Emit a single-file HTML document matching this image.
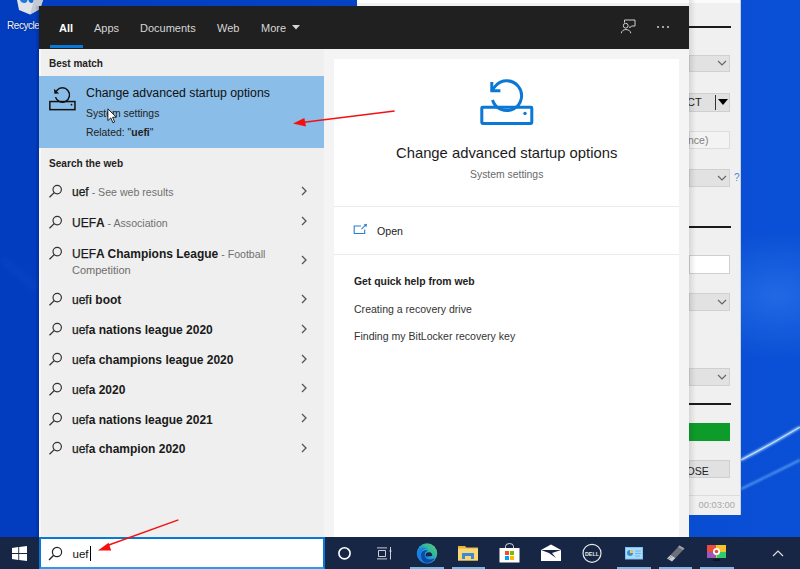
<!DOCTYPE html>
<html><head><meta charset="utf-8">
<style>
*{margin:0;padding:0;box-sizing:border-box}
html,body{width:800px;height:569px;overflow:hidden;background:#033cc0;font-family:"Liberation Sans",sans-serif}
.a{position:absolute;white-space:nowrap;line-height:1}
#back{position:absolute;left:357px;top:0;width:384px;height:515px;background:#f0f0f0;border-right:1px solid #c8d0e0}
#back .top{position:absolute;left:0;top:0;width:100%;height:3px;background:#fbfbfb}
#hdr{position:absolute;left:39px;top:6px;width:650px;height:43px;background:#202020}
#lp{position:absolute;left:39px;top:49px;width:285px;height:488px;background:#efefef}
#rp{position:absolute;left:324px;top:49px;width:365px;height:488px;background:#f4f4f4}
#card{position:absolute;left:334px;top:59px;width:345px;height:478px;background:#fff}
.tab{position:absolute;top:22.5px;font-size:11px;color:#d6d6d6}
.li{position:absolute;left:72px;font-size:12px;font-weight:normal;color:#1a1a1a;-webkit-text-stroke:0.25px #1a1a1a}
.li b{font-weight:bold;-webkit-text-stroke:0}
.li span{font-weight:normal;color:#707070;font-size:10.6px;-webkit-text-stroke:0}
.si{position:absolute;left:48px;width:16px;height:14px}
.chev{position:absolute;left:300px;width:8px;height:10px}
#tb{position:absolute;left:0;top:537px;width:800px;height:32px;background:#162644}
</style></head><body>
<svg id="desk" width="800" height="537" style="position:absolute;left:0;top:0">
  <defs>
    <linearGradient id="dg" x1="0" y1="0" x2="1" y2="0">
      <stop offset="0" stop-color="#023cbf"/><stop offset="0.45" stop-color="#0442c6"/><stop offset="1" stop-color="#0a50d6"/>
    </linearGradient>
    <radialGradient id="dr" cx="0.97" cy="0.55" r="0.12">
      <stop offset="0" stop-color="#2a74ea" stop-opacity="0.7"/><stop offset="1" stop-color="#2a74ea" stop-opacity="0"/>
    </radialGradient>
    <filter id="bl"><feGaussianBlur stdDeviation="1.2"/></filter><filter id="bl2" x="-50%" y="-50%" width="200%" height="200%"><feGaussianBlur stdDeviation="4"/></filter>
  </defs>
  <rect width="800" height="537" fill="url(#dg)"/>
  <rect width="800" height="537" fill="url(#dr)"/>
  <path d="M741 460 Q770 445 800 427" stroke="#a8d4ff" stroke-width="2.5" fill="none" filter="url(#bl)"/>
  <path d="M741 460 Q770 445 800 427" stroke="#e8f4ff" stroke-width="0.8" fill="none"/>
  <path d="M0 258 L39 290" stroke="#3a7ae0" stroke-width="8" stroke-opacity="0.10" fill="none" filter="url(#bl2)"/>
  <path d="M741 489 Q770 475 800 460" stroke="#6fb0ff" stroke-width="1.5" fill="none" filter="url(#bl)"/>
</svg>
<!-- recycle bin -->
<svg class="a" style="left:16px;top:0" width="28" height="16" viewBox="0 0 28 16">
  <path d="M1 0 H27 L24 9 L14 14.5 L3 10 Z" fill="#dfe3ea"/>
  <path d="M14 14.5 L24 9 L27 0 H18 Z" fill="#c4cad4"/>
  <path d="M4 0 Q5 3 8.5 3 Q11 3 11.5 0 Z" fill="#1e78e0"/>
  <path d="M12.5 0 Q13 3.2 16 3 Q17.5 2.5 17.5 0 Z" fill="#1468d8"/>
</svg>
<div class="a" style="left:7px;top:20.8px;font-size:10px;letter-spacing:-0.45px;color:#f4f6fa;text-shadow:0 0 1.5px #001a66">Recycle</div>

<div id="back"><div class="top"></div>
  <div class="a" style="left:332px;top:26px;width:42px;height:2px;background:#1a1a1a"></div>
  <div class="a" style="left:332px;top:55px;width:41px;height:17px;background:#e2e2e2;border:1px solid #d0d0d0"></div>
  <svg class="a" style="left:360px;top:60px" width="10" height="6"><path d="M1 1 L5 5 L9 1" fill="none" stroke="#666" stroke-width="1.2"/></svg>
  <div class="a" style="left:332px;top:93px;width:41px;height:19px;background:#e1e1e1;border:1px solid #cfcfcf"></div>
  <div class="a" style="left:330px;top:97.3px;font-size:11px;color:#222">CT</div>
  <div class="a" style="left:358px;top:95px;width:1px;height:15px;background:#333"></div>
  <svg class="a" style="left:361px;top:99px" width="10" height="7"><path d="M0 0 L10 0 L5 6 Z" fill="#000"/></svg>
  <div class="a" style="left:332px;top:131px;width:41px;height:18px;background:#f3f3f3;border:1px solid #dcdcdc"></div>
  <div class="a" style="left:331px;top:134.5px;font-size:10.5px;color:#808080">nce)</div>
  <div class="a" style="left:332px;top:169px;width:41px;height:18px;background:#e2e2e2;border:1px solid #d0d0d0"></div>
  <svg class="a" style="left:360px;top:175px" width="10" height="6"><path d="M1 1 L5 5 L9 1" fill="none" stroke="#666" stroke-width="1.2"/></svg>
  <div class="a" style="left:377px;top:173px;font-size:10px;color:#4a86d8">?</div>
  <div class="a" style="left:332px;top:226px;width:42px;height:2px;background:#1a1a1a"></div>
  <div class="a" style="left:332px;top:255px;width:41px;height:19px;background:#fff;border:1px solid #cfcfcf"></div>
  <div class="a" style="left:332px;top:293px;width:41px;height:18px;background:#e2e2e2;border:1px solid #d0d0d0"></div>
  <svg class="a" style="left:360px;top:299px" width="10" height="6"><path d="M1 1 L5 5 L9 1" fill="none" stroke="#666" stroke-width="1.2"/></svg>
  <div class="a" style="left:332px;top:368px;width:41px;height:18px;background:#e2e2e2;border:1px solid #d0d0d0"></div>
  <svg class="a" style="left:360px;top:374px" width="10" height="6"><path d="M1 1 L5 5 L9 1" fill="none" stroke="#666" stroke-width="1.2"/></svg>
  <div class="a" style="left:332px;top:403px;width:42px;height:2px;background:#1a1a1a"></div>
  <div class="a" style="left:332px;top:423px;width:41px;height:18px;background:#0d9b2a"></div>
  <div class="a" style="left:332px;top:460px;width:41px;height:18px;background:#e1e1e1;border:1px solid #cfcfcf"></div>
  <div class="a" style="left:329.5px;top:465.5px;font-size:10.6px;color:#222">OSE</div>
  <div class="a" style="left:332px;top:495px;width:52px;height:1px;background:#dcdcdc"></div>
  <div class="a" style="left:341.5px;top:500.2px;font-size:9.4px;color:#a8a8a8">00:03:00</div>
</div>

<div class="a" style="left:689px;top:0;width:7px;height:515px;background:linear-gradient(90deg,rgba(0,0,0,0.10),rgba(0,0,0,0))"></div>
<div class="a" style="left:35px;top:6px;width:4px;height:531px;background:linear-gradient(90deg,rgba(0,0,30,0),rgba(0,0,30,0.22))"></div>
<div id="hdr"></div>
<div id="lp"></div>
<div class="a" style="left:39px;top:49px;width:1.5px;height:488px;background:#f9f9f9"></div>
<div id="rp"></div>
<div id="card"></div>

<!-- tabs -->
<div class="a tab" style="left:59px;font-weight:bold;color:#fff">All</div>
<div class="a" style="left:50px;top:45px;width:33px;height:3px;background:#0a78d7"></div>
<div class="a tab" style="left:94px">Apps</div>
<div class="a tab" style="left:140px">Documents</div>
<div class="a tab" style="left:217px">Web</div>
<div class="a tab" style="left:261px">More</div>
<svg class="a" style="left:292px;top:25px" width="8" height="5"><path d="M0 0 L8 0 L4 4.5 Z" fill="#d6d6d6"/></svg>
<!-- feedback icon -->
<svg class="a" style="left:618px;top:17px" width="20" height="18" viewBox="0 0 20 18">
  <path d="M6.5 5.6 V3 H17 V9 H13.5 L11.8 10.8 V9.5" fill="none" stroke="#cfcfcf" stroke-width="1"/>
  <circle cx="7.7" cy="8.7" r="2.4" fill="none" stroke="#cfcfcf" stroke-width="1"/>
  <path d="M3.3 16.3 C3.6 11.3 12.4 11.3 12.8 16.3" fill="none" stroke="#cfcfcf" stroke-width="1"/>
</svg>
<div class="a" style="left:657px;top:25.5px;width:2px;height:2px;background:#d0d0d0;border-radius:1px"></div>
<div class="a" style="left:662px;top:25.5px;width:2px;height:2px;background:#d0d0d0;border-radius:1px"></div>
<div class="a" style="left:667px;top:25.5px;width:2px;height:2px;background:#d0d0d0;border-radius:1px"></div>

<!-- left panel -->
<div class="a" style="left:49px;top:59px;font-size:10px;font-weight:bold;color:#222">Best match</div>
<div class="a" style="left:39px;top:76px;width:285px;height:72px;background:#8abde7"></div>
<svg class="a" style="left:47px;top:85px" width="32" height="28" viewBox="0 0 32 28">
  <g fill="none" stroke="#111" stroke-width="1.5">
    <rect x="2.85" y="16.55" width="25.1" height="8.1"/>
    <path d="M8.5 12.1 A7.15 7.15 0 1 0 9.87 5.4 L8.2 7.2"/>
  </g>
  <path d="M7.0 3.7 L7.4 8.8 L12.1 8.4 Z" fill="#111"/>
  <circle cx="24.5" cy="19.7" r="0.9" fill="#111"/>
</svg>
<div class="a" style="left:86px;top:87px;font-size:12.3px;color:#111">Change advanced startup options</div>
<div class="a" style="left:86px;top:109px;font-size:10.4px;color:#222">System settings</div>
<div class="a" style="left:86px;top:128px;font-size:10.4px;color:#222">Related: "<b>uefi</b>"</div>
<!-- cursor -->
<svg class="a" style="left:106.8px;top:108.2px" width="10.2" height="16" viewBox="0 0 12 19">
  <path d="M1 1 L1 15 L4.5 11.8 L7 17.5 L9 16.6 L6.6 11 L11 11 Z" fill="#fff" stroke="#000" stroke-width="1"/>
</svg>

<div class="a" style="left:49px;top:158.5px;font-size:10.1px;font-weight:bold;color:#222">Search the web</div>

<!-- rows -->
<div class="a li" style="top:186.13px">uef<span> - See web results</span></div>
<svg class="a si" style="top:184.1px" viewBox="0 0 16 14"><circle cx="9.2" cy="5.6" r="4.2" fill="none" stroke="#333" stroke-width="1.2"/><path d="M6.2 8.6 L1.5 13.3" stroke="#333" stroke-width="1.3"/></svg>
<svg class="a chev" style="top:185.9px" viewBox="0 0 8 10"><path d="M2 1 L6 5 L2 9" fill="none" stroke="#555" stroke-width="1.3"/></svg>
<div class="a li" style="top:216.53px">UEF<b>A</b><span> - Association</span></div>
<svg class="a si" style="top:214.5px" viewBox="0 0 16 14"><circle cx="9.2" cy="5.6" r="4.2" fill="none" stroke="#333" stroke-width="1.2"/><path d="M6.2 8.6 L1.5 13.3" stroke="#333" stroke-width="1.3"/></svg>
<svg class="a chev" style="top:216.3px" viewBox="0 0 8 10"><path d="M2 1 L6 5 L2 9" fill="none" stroke="#555" stroke-width="1.3"/></svg>
<div class="a li" style="top:248.03px">UEF<b>A Champions League</b><span> - Football</span></div>
<svg class="a si" style="top:246.0px" viewBox="0 0 16 14"><circle cx="9.2" cy="5.6" r="4.2" fill="none" stroke="#333" stroke-width="1.2"/><path d="M6.2 8.6 L1.5 13.3" stroke="#333" stroke-width="1.3"/></svg>
<div class="a" style="left:72px;top:265.0px;font-size:11px;color:#6d6d6d">Competition</div>
<svg class="a chev" style="top:255.0px" viewBox="0 0 8 10"><path d="M2 1 L6 5 L2 9" fill="none" stroke="#555" stroke-width="1.3"/></svg>
<div class="a li" style="top:294.03px">uef<b>i boot</b></div>
<svg class="a si" style="top:292.0px" viewBox="0 0 16 14"><circle cx="9.2" cy="5.6" r="4.2" fill="none" stroke="#333" stroke-width="1.2"/><path d="M6.2 8.6 L1.5 13.3" stroke="#333" stroke-width="1.3"/></svg>
<svg class="a chev" style="top:293.8px" viewBox="0 0 8 10"><path d="M2 1 L6 5 L2 9" fill="none" stroke="#555" stroke-width="1.3"/></svg>
<div class="a li" style="top:324.03px">uef<b>a nations league 2020</b></div>
<svg class="a si" style="top:322.0px" viewBox="0 0 16 14"><circle cx="9.2" cy="5.6" r="4.2" fill="none" stroke="#333" stroke-width="1.2"/><path d="M6.2 8.6 L1.5 13.3" stroke="#333" stroke-width="1.3"/></svg>
<svg class="a chev" style="top:323.8px" viewBox="0 0 8 10"><path d="M2 1 L6 5 L2 9" fill="none" stroke="#555" stroke-width="1.3"/></svg>
<div class="a li" style="top:353.73px">uef<b>a champions league 2020</b></div>
<svg class="a si" style="top:351.7px" viewBox="0 0 16 14"><circle cx="9.2" cy="5.6" r="4.2" fill="none" stroke="#333" stroke-width="1.2"/><path d="M6.2 8.6 L1.5 13.3" stroke="#333" stroke-width="1.3"/></svg>
<svg class="a chev" style="top:353.5px" viewBox="0 0 8 10"><path d="M2 1 L6 5 L2 9" fill="none" stroke="#555" stroke-width="1.3"/></svg>
<div class="a li" style="top:383.53px">uef<b>a 2020</b></div>
<svg class="a si" style="top:381.5px" viewBox="0 0 16 14"><circle cx="9.2" cy="5.6" r="4.2" fill="none" stroke="#333" stroke-width="1.2"/><path d="M6.2 8.6 L1.5 13.3" stroke="#333" stroke-width="1.3"/></svg>
<svg class="a chev" style="top:383.3px" viewBox="0 0 8 10"><path d="M2 1 L6 5 L2 9" fill="none" stroke="#555" stroke-width="1.3"/></svg>
<div class="a li" style="top:413.53px">uef<b>a nations league 2021</b></div>
<svg class="a si" style="top:411.5px" viewBox="0 0 16 14"><circle cx="9.2" cy="5.6" r="4.2" fill="none" stroke="#333" stroke-width="1.2"/><path d="M6.2 8.6 L1.5 13.3" stroke="#333" stroke-width="1.3"/></svg>
<svg class="a chev" style="top:413.3px" viewBox="0 0 8 10"><path d="M2 1 L6 5 L2 9" fill="none" stroke="#555" stroke-width="1.3"/></svg>
<div class="a li" style="top:443.33px">uef<b>a champion 2020</b></div>
<svg class="a si" style="top:441.3px" viewBox="0 0 16 14"><circle cx="9.2" cy="5.6" r="4.2" fill="none" stroke="#333" stroke-width="1.2"/><path d="M6.2 8.6 L1.5 13.3" stroke="#333" stroke-width="1.3"/></svg>
<svg class="a chev" style="top:443.1px" viewBox="0 0 8 10"><path d="M2 1 L6 5 L2 9" fill="none" stroke="#555" stroke-width="1.3"/></svg>

<!-- right panel -->
<svg class="a" style="left:476px;top:76px" width="62" height="54" viewBox="0 0 62 54">
  <g fill="none" stroke="#0a78d4" stroke-width="3">
    <rect x="5.8" y="31.2" width="50" height="16.2" rx="0.8"/>
    <path d="M16.5 23.95 A14.85 14.85 0 1 0 19.37 10.1 L15.8 14.3"/>
    <path d="M15.8 6 V14.8 H24.4"/>
  </g>
  <circle cx="49" cy="37.4" r="1.7" fill="#0a78d4"/>
</svg>
<div class="a" style="left:396px;top:145.7px;font-size:14.8px;color:#1b1b1b">Change advanced startup options</div>
<div class="a" style="left:470px;top:169.7px;font-size:10.4px;color:#6a6a6a">System settings</div>
<div class="a" style="left:334px;top:206px;width:345px;height:1px;background:#ebebeb"></div>
<svg class="a" style="left:353.3px;top:222.7px" width="16" height="12" viewBox="0 0 16 12">
  <path d="M8 3 H1.2 V10.5 H11.7 V6.5" fill="none" stroke="#2a7fd2" stroke-width="1.1"/>
  <path d="M8.5 6.2 L12.5 2.2" fill="none" stroke="#2a7fd2" stroke-width="1.1"/>
  <path d="M14 0.8 L10.6 1.4 L13.4 4.2 Z" fill="#2a7fd2"/>
</svg>
<div class="a" style="left:377px;top:226px;font-size:10.6px;color:#222">Open</div>
<div class="a" style="left:334px;top:254px;width:345px;height:1px;background:#ebebeb"></div>
<div class="a" style="left:354px;top:276.5px;font-size:10.4px;font-weight:bold;color:#222">Get quick help from web</div>
<div class="a" style="left:354px;top:304px;font-size:10.55px;color:#333">Creating a recovery drive</div>
<div class="a" style="left:354px;top:331px;font-size:10.55px;color:#333">Finding my BitLocker recovery key</div>

<!-- taskbar -->
<div id="tb"></div>
<svg class="a" style="left:12px;top:546px" width="15" height="15" viewBox="0 0 15 15">
  <path d="M0 2 L6.3 1.1 V7 H0 Z M7.2 1 L15 0 V7 H7.2 Z M0 8 H6.3 V13.9 L0 13 Z M7.2 8 H15 V15 L7.2 14 Z" fill="#fff"/>
</svg>
<div class="a" style="left:39px;top:537px;width:286px;height:32px;background:#fff;border:2px solid #0a78d7;border-bottom-color:#2a9af0"></div>
<svg class="a" style="left:48px;top:546px" width="15" height="15" viewBox="0 0 15 15">
  <circle cx="9" cy="6" r="4.6" fill="none" stroke="#222" stroke-width="1.2"/>
  <path d="M5.7 9.3 L1 14" stroke="#222" stroke-width="1.3"/>
</svg>
<div class="a" style="left:72.5px;top:548.8px;font-size:11.5px;color:#111">uef</div>
<div class="a" style="left:90px;top:546px;width:1px;height:15px;background:#000"></div>

<svg class="a" style="left:337px;top:546px" width="15" height="15"><circle cx="7.5" cy="7.3" r="5.6" fill="none" stroke="#fff" stroke-width="1.6"/></svg>
<svg class="a" style="left:376px;top:546px" width="16" height="15" viewBox="0 0 16 15">
  <path d="M1 1.9 H11 M1 12.9 H11 M2.5 4.5 H9.5 V10.5 H2.5 Z M14.5 1 V13.5" fill="none" stroke="#c9d0da" stroke-width="1"/>
  <path d="M13.6 5 H15.4" stroke="#e8ecf0" stroke-width="1.2"/>
</svg>
<!-- edge -->
<svg class="a" style="left:416px;top:543px" width="22" height="21" viewBox="0 0 22 21">
  <defs><linearGradient id="eg" x1="1" y1="0" x2="0" y2="1"><stop offset="0" stop-color="#5fd068"/><stop offset="0.35" stop-color="#33b7a0"/><stop offset="0.6" stop-color="#1a8fe3"/><stop offset="1" stop-color="#1466c8"/></linearGradient></defs>
  <circle cx="11" cy="10.5" r="10.2" fill="url(#eg)"/>
  <path d="M1 11 C1.5 5 8 3.5 12 5.5 C8 5 4 8 4.5 12.5 C5 17 10 19.5 14.5 19 C9 21.5 1.5 18 1 11 Z" fill="#1a7fe0"/>
  <path d="M5 12 C5 8 9 6.5 12 7.5 C9.5 8.5 8 10.5 9 13.5 C10 16.5 15 17.5 19 15 C16 19.5 12 20.5 9 19.5 C6.5 18.5 5 15.5 5 12 Z" fill="#0c4aa6"/>
  <path d="M9.5 12.5 C9.5 9.5 12.5 8.5 14.5 9.5 C16 10.3 16.5 12 16 13 L10.5 13.5 Z" fill="#162644"/>
</svg>
<!-- explorer -->
<svg class="a" style="left:458px;top:545px" width="20" height="16" viewBox="0 0 20 16">
  <path d="M0 1 H7 L8.5 2.5 H20 V15.5 H0 Z" fill="#e8b43a"/>
  <rect x="0" y="3.5" width="20" height="12" fill="#f8d775"/>
  <rect x="4" y="8" width="12" height="6" fill="#3f87d8"/>
  <rect x="7" y="11" width="6" height="3" fill="#f8d775"/>
</svg>
<!-- store -->
<svg class="a" style="left:499px;top:543px" width="21" height="20" viewBox="0 0 21 20">
  <path d="M6.5 5 V3.5 A4 3 0 0 1 14.5 3.5 V5" fill="none" stroke="#ddd" stroke-width="1"/>
  <rect x="0.5" y="5" width="20" height="14.5" fill="#fff"/>
  <rect x="6" y="8" width="4" height="4" fill="#f25022"/><rect x="11" y="8" width="4" height="4" fill="#7fba00"/>
  <rect x="6" y="13" width="4" height="4" fill="#00a4ef"/><rect x="11" y="13" width="4" height="4" fill="#ffb900"/>
</svg>
<!-- mail -->
<svg class="a" style="left:541px;top:544px" width="20" height="17" viewBox="0 0 20 17">
  <path d="M0 6 L10 0.5 L20 6 V17 H0 Z" fill="#fff"/>
  <path d="M0 6 L20 6 L11 9 L15 14 L8 9 Z" fill="#162644"/>
</svg>
<!-- dell -->
<svg class="a" style="left:582px;top:543px" width="20" height="21" viewBox="0 0 20 21">
  <circle cx="10" cy="10.3" r="9" fill="none" stroke="#e8e8e8" stroke-width="1.2"/>
  <text x="10" y="12.8" font-family="Liberation Sans" font-size="5.4" font-weight="bold" fill="#e8e8e8" text-anchor="middle">DELL</text>
</svg>
<!-- app -->
<svg class="a" style="left:625px;top:547px" width="18" height="13" viewBox="0 0 18 13">
  <rect x="0" y="0" width="18" height="12.5" fill="#7cc4f0"/>
  <rect x="1" y="1" width="16" height="10.5" fill="#a9dcf8"/>
  <circle cx="5" cy="6" r="3" fill="#3a8fd8"/>
  <path d="M5 3 A3 3 0 0 1 8 6 H5 Z" fill="#f6c94a"/>
  <path d="M10 4 H16 M10 6.5 H16 M10 9 H15" stroke="#5aa9e6" stroke-width="0.8"/>
</svg>
<!-- usb -->
<svg class="a" style="left:665px;top:545px" width="20" height="17" viewBox="0 0 20 17">
  <path d="M14.5 0.5 L19.5 3.5 L10.5 13 L5.5 10 Z" fill="#6d7079"/>
  <path d="M14.5 0.5 L19.5 3.5 L18 5 L13 2 Z" fill="#9a9ea6"/>
  <path d="M5.5 10 L10.5 13 L7 16.5 L2 13.5 Z" fill="#c9ccd1"/>
  <path d="M3.5 13 L5 14 M5 11.5 L6.5 12.5" stroke="#6d7079" stroke-width="0.8"/>
</svg>
<!-- colorful monitor -->
<svg class="a" style="left:707px;top:545px" width="20" height="17" viewBox="0 0 20 17">
  <rect x="0" y="0" width="19" height="13" fill="#f2c230"/>
  <path d="M0 0 H9 V7 H0 Z" fill="#e74c3c"/>
  <path d="M0 7 H9 V13 H0 Z" fill="#9b59b6"/>
  <path d="M10 7 H19 V13 H10 Z" fill="#2ecc71"/>
  <circle cx="9.5" cy="6.5" r="3.5" fill="#fff"/>
  <circle cx="9.5" cy="6.5" r="1.8" fill="#e74c3c"/>
  <path d="M6 15 H13" stroke="#111" stroke-width="1.5"/>
</svg>
<svg class="a" style="left:772px;top:549px" width="12" height="8"><path d="M1 7 L6 2 L11 7" fill="none" stroke="#e0e0e0" stroke-width="1.2"/></svg>
<!-- active underlines -->
<div class="a" style="left:410px;top:567px;width:34px;height:2px;background:#76b9ed"></div>
<div class="a" style="left:452px;top:567px;width:33px;height:2px;background:#76b9ed"></div>
<div class="a" style="left:617px;top:567px;width:34px;height:2px;background:#76b9ed"></div>
<div class="a" style="left:659px;top:567px;width:33px;height:2px;background:#76b9ed"></div>
<div class="a" style="left:700px;top:567px;width:34px;height:2px;background:#76b9ed"></div>

<!-- red arrows -->
<svg class="a" style="left:0;top:0" width="800" height="569">
  <path d="M394.6 111 L302 122.5" stroke="#f51010" stroke-width="1.4"/>
  <path d="M293 123.6 L304.4 118 L306 126.4 Z" fill="#f51010"/>
  <path d="M178.4 519.8 L106 546" stroke="#f51010" stroke-width="1.4"/>
  <path d="M97.9 550.4 L108.6 542.8 L111.2 550.4 Z" fill="#f51010"/>
</svg>
</body></html>
